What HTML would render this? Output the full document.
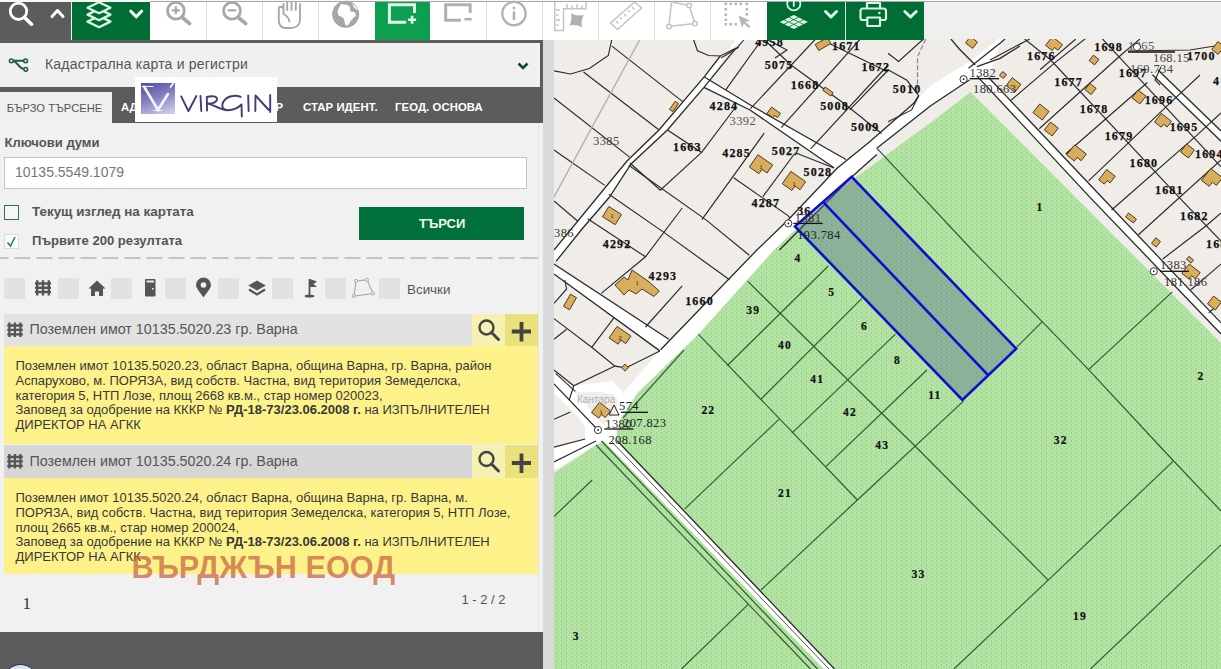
<!DOCTYPE html>
<html><head><meta charset="utf-8">
<style>
*{margin:0;padding:0;box-sizing:border-box}
html,body{width:1221px;height:669px;overflow:hidden;background:#f0f0f0;font-family:"Liberation Sans",sans-serif}
.a{position:absolute}
.t{position:absolute;white-space:nowrap;line-height:1}
</style></head><body>
<!-- MAP -->
<div class="a" id="map" style="left:554px;top:39px;width:667px;height:630px;background:#f1eee8;overflow:hidden">
<svg width="667" height="630" viewBox="554 39 667 630" style="position:absolute;left:0;top:0">
<defs><pattern id="gp" width="5" height="4" patternUnits="userSpaceOnUse"><rect width="5" height="4" fill="#b3e4a3"/><rect x="1" y="0" width="1" height="2" fill="#9ccf8b"/><rect x="3.5" y="2" width="1" height="2" fill="#a6d896"/></pattern></defs>
<rect x="554" y="39" width="667" height="630" fill="#f0ede8"/>
<!-- roads white (under green) -->
<g fill="#ffffff">
<path d="M756.9 250 L660.6 349.7 L637.7 376 L623.1 392.8 L612.6 381.3 L572.8 385.5 L554 371.9 L554 392.8 L554 470 L596 445 L612.9 441.1 L625 430 L640 400 L700 336 L780 250 Z"/>
<path d="M573.7 391.3 L583.6 392.5 L600 392 L613.1 394.6 L618 400 L616.4 411 L609 420 L603.3 424.2 Z" fill="#f0ede8"/>
<path d="M554 393 L579 418 L585.2 427.5 L585.2 439 L554 447.2 Z" fill="#f0ede8"/>
<path d="M652.3 370 L704 328.3 L779.4 250 L851.7 177 L876.8 154.5 L876.8 148.2 L930 106.3 L946.8 95 L969.4 80 L976.9 75.9 L988.6 77.5 L1000 43.2 L1005 39 L998 39 L971.9 60 L930 86 L914 103.1 L870 141.4 L836.8 168.6 L789 219 L756.9 250 L780 250 Z"/>
<path d="M554 250 L627 161 L659 130 L704.4 76.7 L720.3 56 L743.7 40 L735 40 L710.8 78.8 L704 87.3 L667.4 130 L631 164 L609.5 197 L581.2 230 L556 261.4 L554 262 Z"/>
<path d="M704.4 77 L752 106 L846 159.5 L834 167.7 L750 110 L704 87.3 Z"/>
<path d="M554 266 L668.8 339.2 L659.8 350.9 L554 274 Z"/>
<path d="M1152.5 74.8 L1221 141.2 L1221 131 L1158 70 Z"/>
<path d="M976.9 75.9 L1090 197.4 L1221 334 L1221 322.9 L1090 184.8 L988.6 77.5 L976 68 Z"/>
</g>
<!-- green main -->
<path d="M970.5 92 L1221 343 L1221 669 L834 669 L617 441 L616.8 432 L621 418 L637.7 392.8 L698.4 334.2 L774 250 L795 230 L852 180 L870 167 L930 123 Z" fill="url(#gp)"/>
<!-- green lower-left -->
<path d="M554 473 L596 445 L604 441 L824 669 L554 669 Z" fill="url(#gp)"/>
<path d="M604 441 L824 669 L834.5 669 L617.4 441 Z" fill="#fff"/>
<!-- road edge lines -->
<g fill="none" stroke="#2a2a2a" stroke-width="1.3">
<path d="M779.4 250 L851.7 177 L876.8 154.5"/>
<path d="M876.8 148.2 L930 106.3 L946.8 95 L969.4 80"/>
<path d="M968.5 68.3 L1000 43.2 L1005 39"/>
<path d="M976.9 66.6 L1000 58.3 L1020 46"/>
<path d="M950.9 39 L959.3 49 L968.5 58.3 L975.2 65"/>
<path d="M660.6 349.7 L756.9 250 L789 219 L836.8 168.6 L870 141.4 L914 103.1 L918.7 95.7"/>
<path d="M684 350 L623 418" stroke="#3d6b3d"/>
<path d="M554 250 L627 161 L659 130 L704.4 76.7 L720.3 56"/>
<path d="M556 261.4 L581.2 230 L609.5 197 L631 164 L667.4 130 L704 87.3 L710.8 78.8 L735.2 49.1"/>
<path d="M704.4 77 L752 106 L846 159.5"/>
<path d="M704 87.3 L750 110 L834 167.7"/>
<path d="M554 264 L668.8 339.2"/>
<path d="M554 274 L659.8 350.9"/>
<path d="M617.4 441 L834.5 669"/>
<path d="M611 441 L829 669" stroke-width="0.8"/>
<path d="M988.6 77.5 L1090 184.8 L1221 322.9"/>
<path d="M976.9 75.9 L1090 197.4 L1221 334"/>
<path d="M1152.5 74.8 L1221 141.2"/>
<path d="M1158 70 L1221 131"/>
</g>


<!-- beige parcel lines -->
<g fill="none" stroke="#2a2a2a" stroke-width="1.15">
<path d="M554 70.9 L570.5 74 L589.4 68.5 L608.3 55.5 L611.9 39"/>
<path d="M693.3 39 L697.5 50.7 L708.7 55.5 L720.3 56 L737.3 47.5 L743.7 40"/>
<path d="M611.9 46.1 L682.7 101.6"/>
<path d="M583.5 72 L659.1 130"/>
<path d="M554 98 L629.6 157.1"/>
<path d="M554 150 L604.8 185.4"/>
<path d="M554 201 L577.5 221"/>
<path d="M667.4 130 L701.6 152.4 L660.3 190.2 L630 163"/>
<path d="M701.6 152.4 L735 108"/>
<path d="M628.8 165.3 L705.7 219.6 L749.3 255.3"/>
<path d="M764.2 133.2 L701.9 219.6"/>
<path d="M733.7 177.7 L788.3 215.8 L790 218"/>
<path d="M794.7 153.5 L762.9 196.7"/>
<path d="M796 153 L834 168"/>
<path d="M725.7 89.8 L762.3 39"/>
<path d="M750.5 108.7 L815.5 39"/>
<path d="M781.2 127.6 L860.3 39"/>
<path d="M810.7 148.8 L888 65"/>
<path d="M849.7 109.9 L886.3 72"/>
<path d="M763.5 39 L791 65 L846 105 L881.6 133.5"/>
<path d="M820.2 39 L888 72"/>
<path d="M721 57.9 L738.7 47.3"/>
<path d="M766 39 L787 50 L775 58"/>
<path d="M682.2 208 L645.5 256.8 L601.3 293.4"/>
<path d="M608.9 194.2 L663.9 232.4 L729.5 279.7"/>
<path d="M554 318.6 L591.7 347.3 L615 366.1 L625.7 367.9 L659.8 350.9"/>
<path d="M591.7 347.3 L614.1 317.7"/>
<path d="M615 366.1 L573.7 385.8 L554 370"/>
<path d="M554 339.2 L566.6 329.3"/>
<path d="M554 303.3 L566.6 289 L564.8 280"/>
<path d="M573.7 385.8 L569.2 400"/>
<path d="M585.2 439 L554 447.2"/>
<path d="M554 461.9 L595.9 441"/>
<path d="M555.6 373.3 L575.3 391.3"/>
<path d="M554 384 L597 429"/>
<path d="M554 419.3 L570.4 411.9"/>
<path d="M682.2 285.8 L645.5 327"/>
<path d="M587.6 218.7 L645.5 256.8"/>
</g>
<path d="M640.2 39 L554 197" stroke="#b0b0b0" stroke-width="1.4" fill="none"/>

<!-- residential NE -->
<g fill="none" stroke="#2a2a2a" stroke-width="1.15">
<path d="M1024.6 39 L1050.2 59.5 L1179.3 197.7 L1221 241"/>
<path d="M1100 36.3 L1221 166.8"/>
<path d="M1040 69.7 L1075.8 39"/>
<path d="M1010.8 100.4 L1055 62.6 L1090 35"/>
<path d="M1039.2 128.7 L1121.8 54.3 L1140 39"/>
<path d="M1065.6 154 L1147.4 82.5"/>
<path d="M1088.6 180.9 L1172.9 100.3 L1200 75"/>
<path d="M1111.6 210 L1195.9 136.1 L1221 113"/>
<path d="M1138.4 234.7 L1221 160"/>
<path d="M1162.7 259 L1206.2 225.8 L1221 213"/>
<path d="M1190.8 289.7 L1221 264.1"/>
<path d="M1208.7 312.7 L1221 302.5"/>
<path d="M990 60 L1029.7 39"/>
<path d="M888 53.2 L898.6 61.4 L923.4 39"/>
<path d="M888 69.7 L906.9 80.3 L918.7 95.7 L911.6 109.9 L888 121.7"/>
<path d="M1128 51 L1190 50 L1221 45"/>
<path d="M1161 67 L1155 80 L1160 85"/>
</g>
<path d="M925.8 39 L917.5 56.7 L917.5 88.6" stroke="#888" stroke-width="1.2" stroke-dasharray="5 2" fill="none"/>
<!-- green parcel lines -->
<g fill="none" stroke="#2e5a2e" stroke-width="1.15">
<path d="M876.8 148.2 L972 250 L1042.2 321.7 L1088.6 369.6 L1163.3 450 L1221 511"/>
<path d="M1016.8 347.2 L1042.2 321.7"/>
<path d="M1088.6 369.6 L1172.3 291.9"/>
<path d="M1173 461.4 L1048.2 580.1 L953.9 669"/>
<path d="M747.6 281.2 L915 446 L1048.2 580.1"/>
<path d="M698.3 334.1 L857.4 500"/>
<path d="M727.4 365.5 L828.3 266"/>
<path d="M761 399.1 L861.9 298.3"/>
<path d="M792.4 432.7 L895.5 334.1"/>
<path d="M826 466.4 L926.9 370"/>
<path d="M857.4 500 L963.4 401.1"/>
<path d="M684.8 508.9 L779 419.3"/>
<path d="M857.4 500 L761 590"/>
<path d="M1221 544.8 L1090.5 669"/>
<path d="M554 516.5 L592.2 480"/>
<path d="M596 445 L810.4 669"/>
<path d="M601.4 441 L817.5 669"/>
<path d="M748 604.6 L681.5 669"/>
</g>
<!-- blue polygon -->
<path d="M795 226.5 L851.7 176.8 L1016.2 348.7 L962.4 399.9 Z" fill="#566a8c" fill-opacity="0.4"/>
<g fill="none" stroke="#0c10cc" stroke-width="2.6" stroke-linejoin="miter">
<path d="M795 226.5 L851.7 176.8 L1016.2 348.7 L962.4 399.9 Z"/>
<path d="M823 201.9 L988.1 375.2"/>
</g>

<g fill="#d9ad5c" stroke="#3b2a12" stroke-width="0.9" stroke-linejoin="round">
<path d="M669.5 109.4 L675.2 101.3 L678.5 103.6 L672.8 111.7 Z"/>
<path d="M608.8 206.5 L621.5 214.5 L615.2 224.7 L602.5 216.7 Z"/>
<path d="M617.1 326.4 L631.0 336.1 L625.8 343.6 L620.9 340.2 L618.1 344.2 L609.0 337.9 Z"/>
<path d="M570.5 294.2 L576.5 297.7 L569.5 309.8 L563.5 306.3 Z"/>
<path d="M599.5 402.3 L610.5 410.9 L605.3 417.5 L601.5 414.5 L598.7 418.1 L591.5 412.5 Z"/>
<path d="M625.0 364.1 L628.5 367.6 L625.0 371.1 L621.5 367.6 Z"/>
<path d="M757.9 154.7 L772.7 165.0 L767.1 173.0 L761.9 169.4 L758.9 173.7 L749.3 167.0 Z"/>
<path d="M790.9 171.4 L805.7 181.7 L800.1 189.7 L794.9 186.1 L791.9 190.4 L782.3 183.7 Z"/>
<path d="M771.5 107.1 L780.5 113.4 L777.5 117.6 L774.4 115.4 L772.8 117.7 L766.9 113.6 Z"/>
<path d="M825.1 87.0 L833.2 92.7 L830.9 96.0 L822.8 90.3 Z"/>
<path d="M815.2 44.5 L827.3 37.5 L830.8 43.5 L818.7 50.5 Z"/>
<path d="M970.4 36.6 L977.5 42.1 L972.6 48.4 L965.5 42.9 Z"/>
<path d="M1052.3 36.7 L1062.5 44.7 L1058.1 50.3 L1054.5 47.5 L1052.2 50.5 L1045.5 45.3 Z"/>
<path d="M1093.4 55.1 L1098.9 59.4 L1094.6 64.9 L1089.1 60.6 Z"/>
<path d="M1012.2 77.7 L1020.9 84.4 L1014.8 92.3 L1006.1 85.6 Z"/>
<path d="M1039.7 104.0 L1049.1 111.4 L1042.3 120.0 L1032.9 112.6 Z"/>
<path d="M1050.4 122.0 L1058.3 128.1 L1052.2 136.0 L1044.3 129.9 Z"/>
<path d="M1074.6 144.8 L1086.4 154.0 L1081.2 160.7 L1077.1 157.4 L1074.3 161.0 L1066.6 155.0 Z"/>
<path d="M1089.8 83.4 L1096.1 88.3 L1091.2 94.6 L1084.9 89.7 Z"/>
<path d="M1138.1 90.0 L1146.0 96.1 L1139.9 104.0 L1132.0 97.9 Z"/>
<path d="M1161.3 113.4 L1171.5 121.4 L1167.1 127.0 L1163.5 124.2 L1161.2 127.2 L1154.5 122.0 Z"/>
<path d="M1186.6 144.0 L1194.5 150.1 L1188.4 158.0 L1180.5 151.9 Z"/>
<path d="M1106.7 169.5 L1115.3 176.3 L1110.1 182.9 L1107.1 180.6 L1104.3 184.1 L1098.7 179.7 Z"/>
<path d="M1128.6 213.0 L1136.5 219.1 L1133.4 223.0 L1125.5 216.9 Z"/>
<path d="M1155.8 237.8 L1160.5 241.5 L1156.2 247.0 L1151.5 243.3 Z"/>
<path d="M1210.7 168.5 L1222.5 177.7 L1216.5 185.4 L1212.4 182.2 L1209.2 186.3 L1201.5 180.3 Z"/>
<path d="M1189.2 264.0 L1200.2 272.6 L1195.4 278.7 L1191.5 275.7 L1189.0 279.0 L1181.8 273.4 Z"/>
<path d="M1213.6 296.0 L1221.5 302.1 L1215.4 310.0 L1207.5 303.9 Z"/>
<path d="M1188.9 256.3 L1193.6 260.0 L1191.1 263.1 L1186.4 259.4 Z"/>
<path d="M1002.6 71.5 L1006.5 74.6 L1003.4 78.5 L999.5 75.4 Z"/>
<path d="M1217.9 41.6 L1224.2 46.5 L1218.1 54.4 L1211.8 49.5 Z"/>
</g>
<path d="M632 270 L648 281 L659.3 291 L654 296.5 L642 289 L636 294 L629 290 L624 295 L615 285 L624 277 L628 280 Z" fill="#d9ad5c" stroke="#3b2a12" stroke-width="0.9"/>
<g font-family="Liberation Serif,serif" font-size="7" fill="#222" text-anchor="middle">
<text x="612" y="218">1</text>
<text x="620" y="340">2</text>
<text x="637" y="285">1</text>
<text x="761" y="169">1</text>
<text x="794" y="185.5">1</text>
<text x="601" y="414">1</text>
</g>
<g font-family="Liberation Serif,serif" font-size="12px" font-weight="bold" fill="#111" stroke="#111" stroke-width="0.25" letter-spacing="1.15">
<text x="673" y="151">1663</text>
<text x="709.6" y="110.3">4284</text>
<text x="722.3" y="156.6">4285</text>
<text x="771.8" y="155.3">5027</text>
<text x="803.6" y="175.5">5028</text>
<text x="751.5" y="207">4287</text>
<text x="797.2" y="214.5">36</text>
<text x="764.7" y="68.5">5075</text>
<text x="832" y="49.6">1671</text>
<text x="861.5" y="70.9">1672</text>
<text x="790.7" y="88.6">1668</text>
<text x="820.2" y="110">5008</text>
<text x="850.9" y="131.1">5009</text>
<text x="755.2" y="46.1">4958</text>
<text x="892.7" y="93.3">5010</text>
<text x="602.8" y="247.5">4292</text>
<text x="648.6" y="279.7">4293</text>
<text x="685.2" y="305">1660</text>
<text x="1027" y="60.2">1676</text>
<text x="1054.3" y="86.1">1677</text>
<text x="1079.7" y="113.4">1678</text>
<text x="1104.7" y="140.3">1679</text>
<text x="1129.6" y="167">1680</text>
<text x="1155" y="194">1681</text>
<text x="1180" y="220.4">1682</text>
<text x="1206" y="248">1683</text>
<text x="1094.3" y="50.8">1698</text>
<text x="1118.8" y="76.7">1697</text>
<text x="1144.7" y="103.5">1696</text>
<text x="1169.7" y="130.8">1695</text>
<text x="1195" y="157.7">1694</text>
<text x="1187" y="60">1700</text>
<text x="1213" y="85">4</text>
</g>
<g font-family="Liberation Serif,serif" font-size="11.5px" font-weight="bold" fill="#111" stroke="#111" stroke-width="0.2" letter-spacing="1.2">
<text x="794.6" y="261.5">4</text>
<text x="828.3" y="296">5</text>
<text x="861" y="329.6">6</text>
<text x="894" y="364.2">8</text>
<text x="928.2" y="399.3">11</text>
<text x="746.2" y="314">39</text>
<text x="778" y="348.5">40</text>
<text x="810.3" y="382.5">41</text>
<text x="843" y="415.7">42</text>
<text x="875.3" y="449.3">43</text>
<text x="701.4" y="414.4">22</text>
<text x="778" y="496.5">21</text>
<text x="1053.8" y="443.5">32</text>
<text x="911.6" y="577.7">33</text>
<text x="1073" y="620.1">19</text>
<text x="1197.5" y="379.9">2</text>
<text x="572.8" y="640.4">3</text>
<text x="1036.4" y="211">1</text>
</g>
<g font-family="Liberation Serif,serif" font-size="12.5px" letter-spacing="0.4">
<text x="593" y="145.3" fill="#444">3385</text>
<text x="729.5" y="124.5" fill="#555">3392</text>
<text x="554" y="237" fill="#333">386</text>
<text x="794.7" y="222" fill="#333">1381</text>
<text x="797.2" y="238.7" fill="#222">193.784</text>
<text x="969.5" y="76.8" fill="#333">1382</text>
<text x="973" y="93.3" fill="#333">180.663</text>
<text x="1160.1" y="269.2" fill="#333">1383</text>
<text x="1164" y="285.9" fill="#333">181.186</text>
<text x="619" y="410.2" fill="#222">574</text>
<text x="605.3" y="428" fill="#333">1380</text>
<text x="623" y="427" fill="#222">207.823</text>
<text x="608.4" y="443.7" fill="#222">208.168</text>
<text x="1128" y="50" fill="#555">1365</text>
<text x="1153" y="62" fill="#444">168.15</text>
<text x="1130" y="73" fill="#444">169.734</text>
</g>
<text x="577" y="403" font-family="Liberation Sans,sans-serif" font-size="10px" fill="#b0b0b0">Кантара</text>
<g stroke="#111" stroke-width="1.3">
<line x1="793.4" y1="223.4" x2="822.6" y2="223.4"/>
<line x1="969.5" y1="78.7" x2="999" y2="78.7"/>
<line x1="1160" y1="271.3" x2="1189" y2="271.3"/>
<line x1="621" y1="412.3" x2="648" y2="412.3"/>
<line x1="604.2" y1="429" x2="633.5" y2="429"/>
<line x1="1128" y1="52" x2="1175" y2="52"/>
</g>
<g fill="#fff" stroke="#222" stroke-width="0.9">
<circle cx="788.3" cy="223.4" r="3.6"/>
<circle cx="963.6" cy="79.2" r="3.6"/>
<circle cx="1153.8" cy="271.3" r="3.6"/>
<circle cx="598" cy="430" r="3.6"/>
<circle cx="1137" cy="47" r="3.6"/>
</g>
<g fill="#222">
<circle cx="788.3" cy="223.4" r="0.9"/>
<circle cx="963.6" cy="79.2" r="0.9"/>
<circle cx="1153.8" cy="271.3" r="0.9"/>
<circle cx="598" cy="430" r="0.9"/>
</g>
<path d="M614 405 L619 415 L609 415 Z" fill="none" stroke="#222" stroke-width="1"/>
</svg>
</div>

<!-- TOOLBAR -->
<div class="a" style="left:0;top:0;width:1221px;height:2px;background:#f8f8f8"></div>
<div class="a" style="left:150px;top:1px;width:1071px;height:1px;background:#a8a8a8"></div>
<div class="a" style="left:924px;top:2px;width:297px;height:37px;background:#efefef"></div>
<div class="a" style="left:0;top:2px;width:542px;height:41px;background:#5c5c5c"></div>
<div class="a" style="left:71px;top:2px;width:1px;height:38px;background:#e8f8ee"></div>
<div class="a" style="left:72px;top:2px;width:78px;height:38px;background:#006d35"></div>
<div class="a" style="left:150px;top:2px;width:225px;height:38px;background:#fff"></div>
<div class="a" style="left:375px;top:2px;width:55px;height:38px;background:#0b9f4f"></div>
<div class="a" style="left:430px;top:2px;width:337px;height:38px;background:#fff"></div>
<div class="a" style="left:767px;top:2px;width:157px;height:38px;background:#006d35"></div>
<div class="a" style="left:845px;top:2px;width:1px;height:38px;background:#c8f0d8"></div>
<!-- separators -->
<div class="a" style="left:206px;top:2px;width:1px;height:38px;background:#dcdcdc"></div>
<div class="a" style="left:262px;top:2px;width:1px;height:38px;background:#dcdcdc"></div>
<div class="a" style="left:318px;top:2px;width:1px;height:38px;background:#dcdcdc"></div>
<div class="a" style="left:486px;top:2px;width:1px;height:38px;background:#dcdcdc"></div>
<div class="a" style="left:542px;top:2px;width:1px;height:38px;background:#dcdcdc"></div>
<div class="a" style="left:598px;top:2px;width:1px;height:38px;background:#dcdcdc"></div>
<div class="a" style="left:654px;top:2px;width:1px;height:38px;background:#dcdcdc"></div>
<div class="a" style="left:710px;top:2px;width:1px;height:38px;background:#dcdcdc"></div>
<svg class="a" style="left:0;top:0" width="924" height="40" viewBox="0 0 924 40" id="tbicons">

<g fill="none" stroke="#fff" stroke-linecap="round" stroke-linejoin="round">
<circle cx="18.5" cy="11.3" r="8.2" stroke-width="2.8"/>
<path d="M24.5 17.5 L31.5 24.2" stroke-width="3.6"/>
<path d="M52 16.6 L57.5 10.6 L63 16.6" stroke-width="3"/>
<path d="M130.8 11.2 L136.2 16.8 L141.6 11.2" stroke-width="3"/>
</g>
<g fill="#006d35" stroke="#d8f6e2" stroke-width="2.3" stroke-linejoin="round">
<path d="M99 16 L110.5 21.6 L99 27.2 L87.5 21.6 Z"/>
<path d="M99 9 L110.5 14.6 L99 20.2 L87.5 14.6 Z"/>
<path d="M99 2.2 L110.5 7.7 L99 13.2 L87.5 7.7 Z"/>
</g>
<g fill="none" stroke="#a8a8a8" stroke-linecap="round">
<circle cx="175.9" cy="10.8" r="8.4" stroke-width="2.8"/>
<path d="M182 17.2 L189.6 23.6" stroke-width="3.8"/>
<path d="M171.8 10.3 H179.8 M175.8 6.3 V14.3" stroke-width="2.2" stroke-linecap="butt"/>
<circle cx="232" cy="10.8" r="8.4" stroke-width="2.8"/>
<path d="M238.1 17.2 L245.7 23.6" stroke-width="3.8"/>
<path d="M227.8 10.3 H236.2" stroke-width="2.2" stroke-linecap="butt"/>
<path d="M283.5 13 V4 M287.2 10 V2 M291.5 10 V2 M295.8 10 V2 M300 4 V20 C300 25 296 28 291 28 H286 C281 28 278.8 25 278.8 20 V9 C278.8 6 282.5 6 283.5 9 V14 C287 16 289 18 289.5 21.5" stroke-width="1.9"/>
</g>
<circle cx="345.7" cy="14.2" r="13.5" fill="#a6a6a6"/>
<path d="M341 4 C344 5 347 4 349 6 C351 8 349 11 352 12 C354 11 356 13 356 16 C353 17 352 20 350 22 C349 25 347 26 345.5 25 C344 21 345 19 342 17 C338 16 337 13 338 10 C339 7 340 6 341 4 Z M352 3.5 C355 5 357 7 358 10 C356 10 354 8 352 3.5 Z" fill="#fff"/>
<g fill="none" stroke="#e0fbe9" stroke-width="3">
<path d="M406.2 22.2 H389.4 V4.8 H414.5 V13.1"/>
<path d="M412.1 15.7 V23.7 M408.1 19.7 H416.1" stroke-width="2.6"/>
</g>
<g fill="none" stroke="#b0b0b0" stroke-width="3">
<path d="M461 20.2 H445.7 V4.8 H470.2 V13.1"/>
<path d="M464.5 19.2 H471.7" stroke-width="2.4"/>
</g>
<circle cx="514" cy="13.6" r="11.7" fill="none" stroke="#b0b0b0" stroke-width="2.2"/>
<path d="M514 11.5 V20" stroke="#b0b0b0" stroke-width="2.6"/>
<circle cx="514" cy="8" r="1.5" fill="#b0b0b0"/>
<g fill="none" stroke="#c4c4c4" stroke-width="1.5">
<path d="M554.7 2 V30.5 H563.5 V8.8 H586 V2"/>
<path d="M556 10 H560 M556 15 H558.5 M556 20 H560 M556 25 H558.5 M567 4 V8 M572 5.5 V8 M577 4 V8 M582 5.5 V8"/>
<path d="M610.5 23 L634.5 2 L641.5 8 L617.5 29.5 Z"/>
<path d="M616 21 L618.5 23.5 M620 17.5 L621.8 19.3 M624 14 L626.5 16.5 M628 10.5 L629.8 12.3 M632 7 L634.5 9.5"/>
<path d="M671.5 2 L689.2 5.5 L695 23.6 L668.9 26.5 Z"/>
</g>
<g fill="#fff" stroke="#c4c4c4" stroke-width="1.4"><circle cx="689.2" cy="5.5" r="2.3"/><circle cx="695" cy="23.6" r="2.3"/><circle cx="668.9" cy="26.5" r="2.3"/></g>
<path d="M570 14 Q576 16.5 583 14 Q580.5 20 583 26.5 Q576 24 570 26.5 Q572.5 20 570 14 Z" fill="#b0b0b0" transform="rotate(8 576.5 20.3)"/>

<g fill="#b8b8b8">
<rect x="724.5" y="2.5" width="2.6" height="2.6"/><rect x="729.5" y="2.5" width="2.6" height="2.6"/><rect x="734.5" y="2.5" width="2.6" height="2.6"/><rect x="739.5" y="2.5" width="2.6" height="2.6"/><rect x="745.5" y="2.5" width="2.6" height="2.6"/>
<rect x="724.5" y="8" width="2.6" height="2.6"/><rect x="724.5" y="13.5" width="2.6" height="2.6"/><rect x="724.5" y="18.5" width="2.6" height="2.6"/><rect x="724.5" y="23" width="2.6" height="2.6"/>
<rect x="745.5" y="8" width="2.6" height="2.6"/><rect x="745.5" y="13" width="2.6" height="2.6"/>
<rect x="729.5" y="23" width="2.6" height="2.6"/><rect x="734.5" y="23" width="2.6" height="2.6"/>
<path d="M738.5 15.5 L750 20.5 L745.5 22 L750.5 26.5 L748.5 28 L744 23.5 L742 27.5 Z"/>
</g>
<g fill="none" stroke="#d8f6e2" stroke-linecap="round" stroke-linejoin="round">
<circle cx="793.8" cy="3.8" r="6.6" stroke-width="1.8"/>
<path d="M793.8 1.5 V6" stroke-width="1.8"/>
<path d="M825.5 11.5 L831 17 L836.5 11.5 M904.8 11.5 L910.5 17 L916.2 11.5" stroke-width="3"/>
<path d="M867 8 V3 H880 V8 M867 20 H862.5 C861 20 860.5 19 860.5 18 V11 C860.5 9.5 861.5 8.5 863 8.5 H883.5 C885 8.5 886 9.5 886 11 V18 C886 19 885.5 20 884 20 H880 M867.3 17.5 H880 V26 H867.3 Z" stroke-width="2.2"/>
</g>
<circle cx="879.4" cy="13" r="1.2" fill="#d8f6e2"/>
<g fill="#d8f6e2" transform="translate(793.8 22) scale(1 0.5) rotate(45)">
<rect x="-10" y="-10" width="6" height="6"/><rect x="-3" y="-10" width="6" height="6"/><rect x="4" y="-10" width="6" height="6"/>
<rect x="-10" y="-3" width="6" height="6"/><rect x="-3" y="-3" width="6" height="6"/><rect x="4" y="-3" width="6" height="6"/>
<rect x="-10" y="4" width="6" height="6"/><rect x="-3" y="4" width="6" height="6"/><rect x="4" y="4" width="6" height="6"/>
</g>
</svg>

<!-- LEFT PANEL -->
<div class="a" style="left:0;top:40px;width:543px;height:629px;background:#5c5c5c"></div>
<div class="a" style="left:543px;top:40px;width:11px;height:629px;background:#d9d9d9"></div>
<div class="a" style="left:0;top:43px;width:540px;height:44px;background:#f0f0f0"></div>
<div class="a" style="left:0;top:122.5px;width:543px;height:509.5px;background:#f1f1f1"></div>
<div class="a" style="left:538px;top:123px;width:1px;height:509px;background:#e6e6e6"></div>


<!-- title -->
<svg class="a" style="left:0;top:50px" width="40" height="30" viewBox="0 50 40 30">
<g fill="none" stroke="#1f5e3c" stroke-width="1.5">
<circle cx="11.3" cy="60.8" r="1.9"/><circle cx="25.6" cy="60.8" r="1.9"/><circle cx="25.8" cy="69.3" r="1.9"/>
<path d="M13.2 60.8 H23.7 M13.6 61.3 C18 62 18.5 68.5 23.9 69" stroke-width="1.9"/>
</g></svg>
<div class="t" style="left:45px;top:57.2px;font-size:14px;letter-spacing:0.2px;color:#555">Кадастрална карта и регистри</div>
<svg class="a" style="left:510px;top:55px" width="25" height="20" viewBox="510 55 25 20"><path d="M518.5 63.5 L523 68 L527.5 63.5" fill="none" stroke="#0d4a2c" stroke-width="2.6"/></svg>
<!-- tabs -->
<div class="a" style="left:0;top:92px;width:112px;height:31px;background:#f0f0f0"></div>
<div class="t" style="left:6.7px;top:103.2px;font-size:11.2px;color:#555">БЪРЗО ТЪРСЕНЕ</div>
<div class="t" style="left:121px;top:102.4px;font-size:11.3px;font-weight:bold;color:#fff">АДРЕС</div>
<div class="t" style="left:241.5px;top:102.4px;font-size:11.3px;font-weight:bold;color:#fff">НОМЕР</div>
<div class="t" style="left:303px;top:102.4px;font-size:11.3px;font-weight:bold;color:#fff;letter-spacing:0.1px">СТАР ИДЕНТ.</div>
<div class="t" style="left:395px;top:102.4px;font-size:11.3px;font-weight:bold;color:#fff;letter-spacing:0.1px">ГЕОД. ОСНОВА</div>
<!-- logo -->
<div class="a" style="left:135px;top:77px;width:142px;height:45px;background:#fff"></div>
<div class="a" style="left:141px;top:82.5px;width:34px;height:31px;background:linear-gradient(160deg,#4c4ca0 0%,#8080c0 45%,#d4d4ec 100%)"></div>
<svg class="a" style="left:135px;top:76px" width="145" height="48" viewBox="135 76 145 48">
<g fill="none" stroke="#f4f4ff" stroke-linecap="round">
<path d="M144 86.5 L158 110 L168 94" stroke-width="2.6"/>
<path d="M142 86.5 H153 M154 110.5 H162" stroke-width="1.2"/>
<path d="M170.5 87 L173.5 83" stroke-width="1.8"/>
</g>
<g fill="none" stroke="#3d3d78" stroke-width="1.9" stroke-linecap="round" stroke-linejoin="round">
<path d="M181.2 96.4 L188.4 111.2 L196.4 96"/>
<path d="M200.5 96 L201.3 111"/>
<path d="M207 110.5 L206.8 97 C212 95.5 217.5 96 217 99.5 C216.5 102.5 211 104 208 103.5 C214 105 219 109 226 110"/>
<path d="M240.7 96.8 C235 94.5 227 96 223.5 101.5 C221 106 222.5 110.5 228 110.3 C233 110 238 108 241.5 104.5 L241.8 116.4"/>
<path d="M248.2 95.5 L248.6 111"/>
<path d="M255.3 111 L255.5 95.5 L268.8 110 M270.2 95 L270.2 112"/>
</g></svg>
<!-- search -->
<div class="t" style="left:4.5px;top:136px;font-size:13px;font-weight:bold;color:#555">Ключови думи</div>
<div class="a" style="left:4px;top:156.5px;width:523px;height:32px;background:#fff;border:1px solid #c4c4c4"></div>
<div class="t" style="left:15px;top:165.2px;font-size:14px;color:#777">10135.5549.1079</div>
<div class="a" style="left:4px;top:205px;width:15px;height:15px;border:1.3px solid #2f6f58;background:#f6f6f6"></div>
<div class="t" style="left:32px;top:205.3px;font-size:13.4px;font-weight:bold;color:#555">Текущ изглед на картата</div>
<div class="a" style="left:4px;top:234px;width:15px;height:15px;border:1px solid #dcdcdc;background:#fafafa"></div>
<svg class="a" style="left:4px;top:234px" width="15" height="15" viewBox="0 0 15 15"><path d="M3.5 8.5 L6.5 12 L11 3" fill="none" stroke="#1d8a5a" stroke-width="1.6"/></svg>
<div class="t" style="left:32px;top:233.6px;font-size:13.1px;font-weight:bold;color:#555">Първите 200 резултата</div>
<div class="a" style="left:359px;top:207px;width:165px;height:33px;background:#00713a"></div>
<div class="t" style="left:419px;top:217px;font-size:13px;font-weight:bold;color:#f4fbe0">ТЪРСИ</div>
<div class="a" style="left:0;top:257px;width:538px;height:2px;background:repeating-linear-gradient(90deg,#c4c4c4 0 16.5px,transparent 16.5px 22px);background-position:-7.5px 0"></div>


<!-- filter row -->
<div class="a" style="left:4px;top:277.5px;width:21px;height:21px;background:#e2e2e2"></div>
<div class="a" style="left:57.5px;top:277.5px;width:21px;height:21px;background:#e2e2e2"></div>
<div class="a" style="left:111px;top:277.5px;width:21px;height:21px;background:#e2e2e2"></div>
<div class="a" style="left:164.5px;top:277.5px;width:21px;height:21px;background:#e2e2e2"></div>
<div class="a" style="left:218px;top:277.5px;width:21px;height:21px;background:#e2e2e2"></div>
<div class="a" style="left:271.5px;top:277.5px;width:21px;height:21px;background:#e2e2e2"></div>
<div class="a" style="left:325px;top:277.5px;width:21px;height:21px;background:#e2e2e2"></div>
<div class="a" style="left:378.5px;top:277.5px;width:21px;height:21px;background:#e2e2e2"></div>
<svg class="a" style="left:0;top:270px" width="380" height="35" viewBox="0 270 380 35">
<g fill="none" stroke="#555" stroke-width="2.4">
<path d="M35 283.5 H51 M35 287.8 H51 M35 292 H51 M37.2 280.2 V295.5 M43 280.2 V295.5 M48.8 280.2 V295.5"/>
</g>
<path d="M97 280.5 L88.5 288.5 H91 V296 H95 V291.5 H99 V296 H103 V288.5 H105.5 Z" fill="#555"/>
<rect x="145" y="279" width="10.5" height="17.5" rx="1" fill="#555"/>
<rect x="146.5" y="280.5" width="7.5" height="2" fill="#e8e8e8"/>
<rect x="152" y="288" width="1.5" height="1.5" fill="#fff"/>
<path d="M203.5 297.5 C199 291 196 288 196 285 A7.5 7.5 0 0 1 211 285 C211 288 208 291 203.5 297.5 Z" fill="#555"/>
<circle cx="203.5" cy="285" r="2.8" fill="#f0f0f0"/>
<path d="M257 280.5 L265.8 285.5 L257 290.5 L248.3 285.5 Z" fill="#555"/>
<path d="M249 289.5 L257 294.5 L265 289.5" fill="none" stroke="#555" stroke-width="2.2"/>
<path d="M309.5 279 V295" stroke="#555" stroke-width="1.8"/>
<path d="M310 279 L317 281.5 L313.5 284 L317 287 L310 287 Z" fill="#555"/>
<ellipse cx="309.5" cy="296" rx="5" ry="1.6" fill="#555"/>
<path d="M356 281 L367 279.8 L373 293.5 L354 296 Z" fill="none" stroke="#aaa" stroke-width="1.2"/>
<g fill="#f0f0f0" stroke="#aaa" stroke-width="1"><circle cx="356" cy="281" r="1.6"/><circle cx="367" cy="279.8" r="1.6"/><circle cx="373" cy="293.5" r="1.6"/><circle cx="354" cy="296" r="1.6"/></g>
</svg>
<div class="t" style="left:407px;top:283px;font-size:13.4px;color:#555">Всички</div>

<!-- result 1 -->
<div class="a" style="left:4px;top:314px;width:468px;height:32px;background:#e2e2e2"></div>
<div class="a" style="left:472px;top:314px;width:33px;height:32px;background:#f6f1b2"></div>
<div class="a" style="left:505px;top:314px;width:33px;height:32px;background:#e9e17c"></div>
<div class="a" style="left:4px;top:346px;width:534px;height:98px;background:#fdf28a"></div>
<div class="t" style="left:29.5px;top:322px;font-size:14.3px;color:#555">Поземлен имот 10135.5020.23 гр. Варна</div>
<div class="a" style="left:15.5px;top:359px;font-size:13px;line-height:14.8px;color:#383838;width:520px">Поземлен имот 10135.5020.23, област Варна, община Варна, гр. Варна, район<br>Аспарухово, м. ПОРЯЗА, вид собств. Частна, вид територия Земеделска,<br>категория 5, НТП Лозе, площ 2668 кв.м., стар номер 020023,<br>Заповед за одобрение на КККР № <b>РД-18-73/23.06.2008 г.</b> на ИЗПЪЛНИТЕЛЕН<br>ДИРЕКТОР НА АГКК</div>
<!-- result 2 -->
<div class="a" style="left:4px;top:445px;width:468px;height:33px;background:#d6d6d6"></div>
<div class="a" style="left:472px;top:445px;width:33px;height:33px;background:#f6f1b2"></div>
<div class="a" style="left:505px;top:445px;width:33px;height:33px;background:#e9e17c"></div>
<div class="a" style="left:4px;top:478px;width:534px;height:96px;background:#fdf28a"></div>
<div class="t" style="left:29.5px;top:453.5px;font-size:14.3px;color:#555">Поземлен имот 10135.5020.24 гр. Варна</div>
<div class="a" style="left:15.5px;top:491px;font-size:13px;line-height:14.8px;color:#383838;width:520px">Поземлен имот 10135.5020.24, област Варна, община Варна, гр. Варна, м.<br>ПОРЯЗА, вид собств. Частна, вид територия Земеделска, категория 5, НТП Лозе,<br>площ 2665 кв.м., стар номер 200024,<br>Заповед за одобрение на КККР № <b>РД-18-73/23.06.2008 г.</b> на ИЗПЪЛНИТЕЛЕН<br>ДИРЕКТОР НА АГКК</div>
<svg class="a" style="left:0;top:310px" width="545" height="175" viewBox="0 310 545 175">
<g id="r1">
<path d="M7.3 325.5 H22.8 M7.3 329.9 H22.8 M7.3 334.3 H22.8 M9.4 322.5 V337 M14.9 322.5 V337 M20.4 322.5 V337" fill="none" stroke="#555" stroke-width="2.3"/>
<circle cx="486.5" cy="327.5" r="7" fill="none" stroke="#444" stroke-width="2.4"/>
<path d="M491.5 332.5 L498.5 339.5" stroke="#444" stroke-width="3" stroke-linecap="round"/>
<path d="M521.5 322 V341.5 M511.8 331.5 H531" stroke="#444" stroke-width="3.8"/>
</g>
<use href="#r1" y="131.5"/>
</svg>
<div class="t" style="left:131.5px;top:553.2px;font-size:30.7px;font-weight:bold;color:rgba(198,92,58,0.7);letter-spacing:0px">ВЪРДЖЪН ЕООД</div>
<!-- pagination -->
<div class="t" style="left:22.5px;top:594.5px;font-family:'Liberation Serif',serif;font-size:17px;color:#333">1</div>
<div class="t" style="left:461.5px;top:593px;font-size:13px;color:#555">1 - 2 / 2</div>
<div class="a" style="left:0;top:632px;width:543px;height:37px;background:#5c5c5c"></div>
<div class="a" style="left:2.8px;top:664.3px;width:35px;height:35px;border-radius:50%;background:#d4e4f2;border:1.5px solid #1b2b3b"></div>

</body></html>
